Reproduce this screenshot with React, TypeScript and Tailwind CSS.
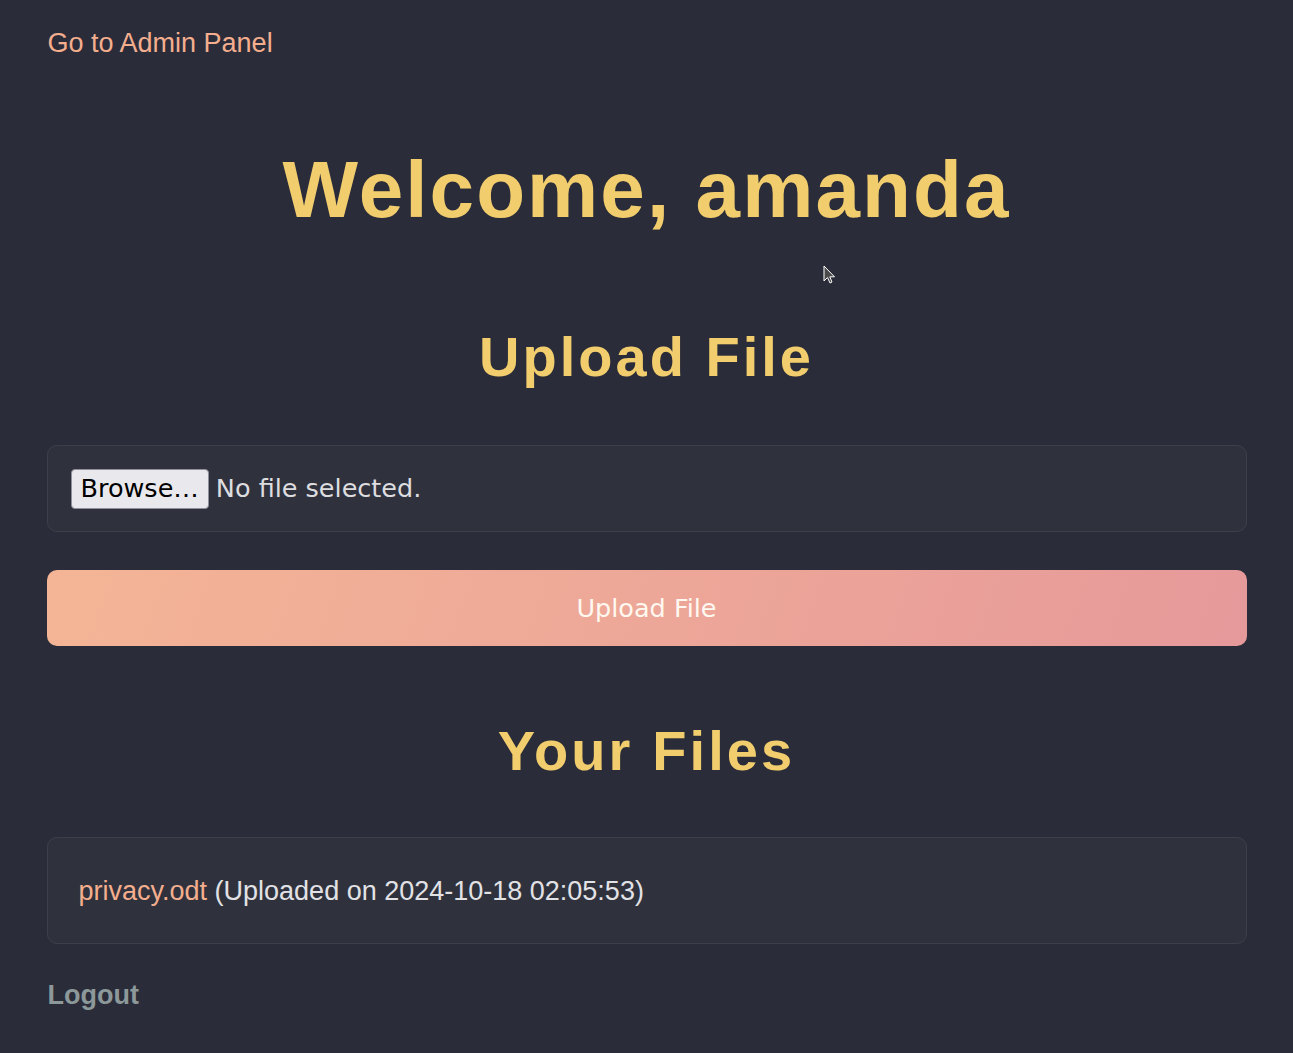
import React from "react";

export default function App() {
  return (
    <div className="relative min-h-screen bg-[#2a2c39] font-['Liberation_Sans',Arial,sans-serif]">
      <div className="mx-auto max-w-[1200px] pt-[28px] pb-[40px]">
        <a href="#" className="ml-[1px] block text-[27px] leading-[31px] text-[#f4ae8e]">
          Go to Admin Panel
        </a>

        <h1 className="mt-[85px] text-center text-[80px] leading-[92px] font-bold tracking-[2.1px] text-[#f1cd6d]">
          Welcome, amanda
        </h1>

        <h2 className="mt-[89px] text-center text-[56px] leading-[64px] font-bold tracking-[3px] text-[#f1cd6d]">
          Upload File
        </h2>

        <div className="mt-[56px] rounded-[10px] border border-[#3d404a] bg-[#2f323c] px-[22px] pt-[23px] pb-[22px]">
          <div className="flex items-center font-['DejaVu_Sans',sans-serif] text-[25.5px]">
            <span className="ml-[1px] flex h-[40px] items-center rounded-[4px] border border-[#8f8f9d] bg-[#e9e9ed] px-[9px] leading-none text-black">
              Browse…
            </span>
            <span className="ml-[7px] leading-none text-[#dddde0]">No file selected.</span>
          </div>
        </div>

        <button className="mt-[38px] flex h-[76px] w-full items-center justify-center rounded-[10px] bg-[linear-gradient(110deg,#f4b596,#e6999a)] font-['DejaVu_Sans',sans-serif] text-[25.5px] text-[#fff8f0]">
          Upload File
        </button>

        <h2 className="mt-[73px] text-center text-[56px] leading-[64px] font-bold tracking-[3.1px] text-[#f1cd6d]">
          Your Files
        </h2>

        <div className="mt-[54px] rounded-[10px] border border-[#3d404a] bg-[#2f323c] pt-[38px] pb-[36px] pl-[31px]">
          <p className="text-[27px] leading-[31px] text-[#e2e2e6]">
            <a href="#" className="text-[#f4ae8e]">privacy.odt</a> (Uploaded on 2024-10-18 02:05:53)
          </p>
        </div>

        <a href="#" className="mt-[36px] ml-[1px] block text-[27px] leading-[31px] font-bold text-[#8c9899]">
          Logout
        </a>
      </div>

      <svg
        className="absolute left-[823px] top-[265px]"
        width="14"
        height="22"
        viewBox="0 0 14 22"
      >
        <path d="M1 1 L1 16 L4.5 12.5 L7 18 L9 17 L6.8 11.8 L11.5 11.8 Z" fill="#4a4a4a" stroke="#ffffff" strokeWidth="1" strokeLinejoin="round" />
      </svg>
    </div>
  );
}
